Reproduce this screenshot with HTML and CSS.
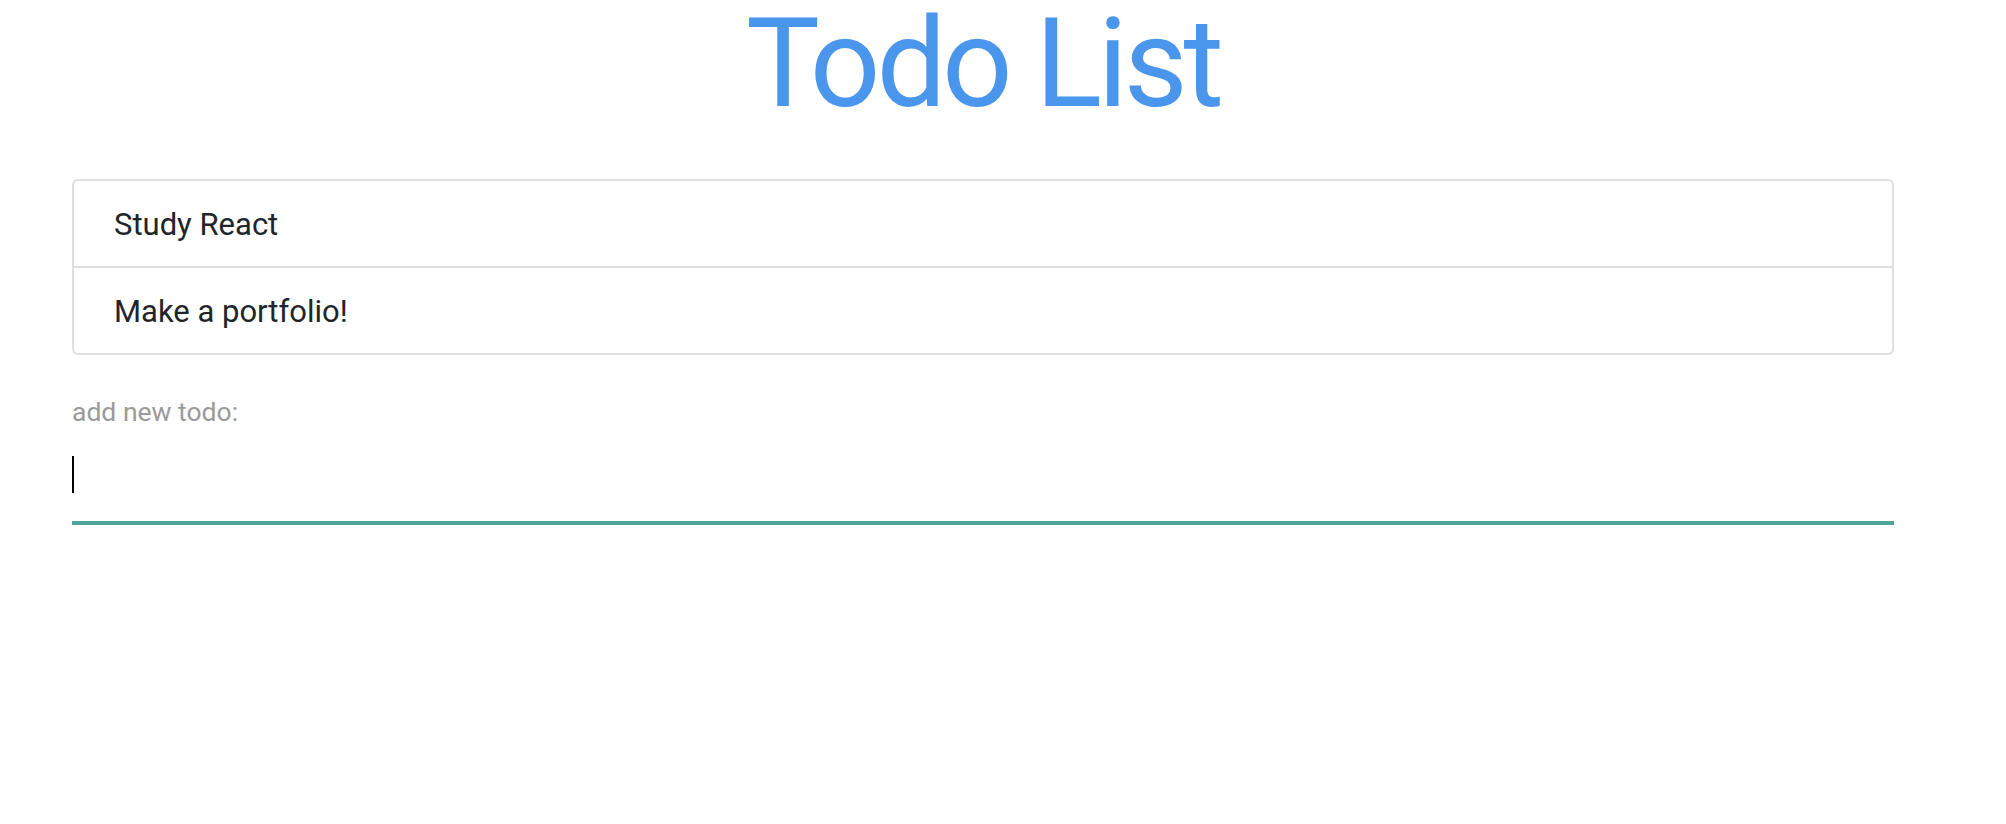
FILE: index.html
```html
<!DOCTYPE html>
<html lang="en">
<head>
<meta charset="utf-8">
<title>Todo List</title>
<link rel="stylesheet" href="styles.css">
</head>
<body>
<div class="container">
  <h1 class="title">Todo List</h1>
  <ul class="list-group">
    <li class="list-item">Study React</li>
    <li class="list-item">Make a portfolio!</li>
  </ul>
  <div class="field">
    <label class="field-label" for="todo">add new todo:</label>
    <div class="field-input-wrap">
      <input id="todo" class="field-input" type="text" value="">
      <span class="caret"></span>
    </div>
  </div>
</div>
</body>
</html>
```
FILE: styles.css
```css
* { box-sizing: border-box; }

body {
  margin: 0;
  background: #ffffff;
  font-family: Roboto, "Liberation Sans", sans-serif;
  color: #212529;
}

.container {
  margin: 0 112px 0 72px;
  display: flex;
  flex-direction: column;
}

.title {
  margin: 0;
  padding-top: 12px;
  font-family: Roboto, "Liberation Sans", sans-serif;
  font-weight: 400;
  font-size: 124px;
  line-height: 104px;
  letter-spacing: -4.2px;
  text-align: center;
  color: #4a96ed;
}

.list-group {
  list-style: none;
  margin: 63px 0 0 0;
  padding: 0;
  border: 2px solid #dfdfdf;
  border-radius: 6px;
}

.list-item {
  padding: 25px 40px 23px 40px;
  font-size: 31px;
  line-height: 37px;
  color: #212529;
}

.list-item + .list-item {
  border-top: 2px solid #dfdfdf;
}

.field {
  display: flex;
  flex-direction: column;
  margin-top: 41px;
}

.field-label {
  font-size: 26.5px;
  line-height: 32px;
  color: #9a9a9a;
}

.field-input-wrap {
  position: relative;
  height: 97px;
  border-bottom: 4px solid #4ea699;
}

.field-input {
  width: 100%;
  height: 100%;
  border: none;
  outline: none;
  padding: 0;
  background: transparent;
  font-family: Roboto, "Liberation Sans", sans-serif;
  font-size: 31px;
  color: #212529;
  caret-color: transparent;
}

.caret {
  position: absolute;
  left: 0;
  top: 28px;
  width: 2px;
  height: 37px;
  background: #000000;
}
```
